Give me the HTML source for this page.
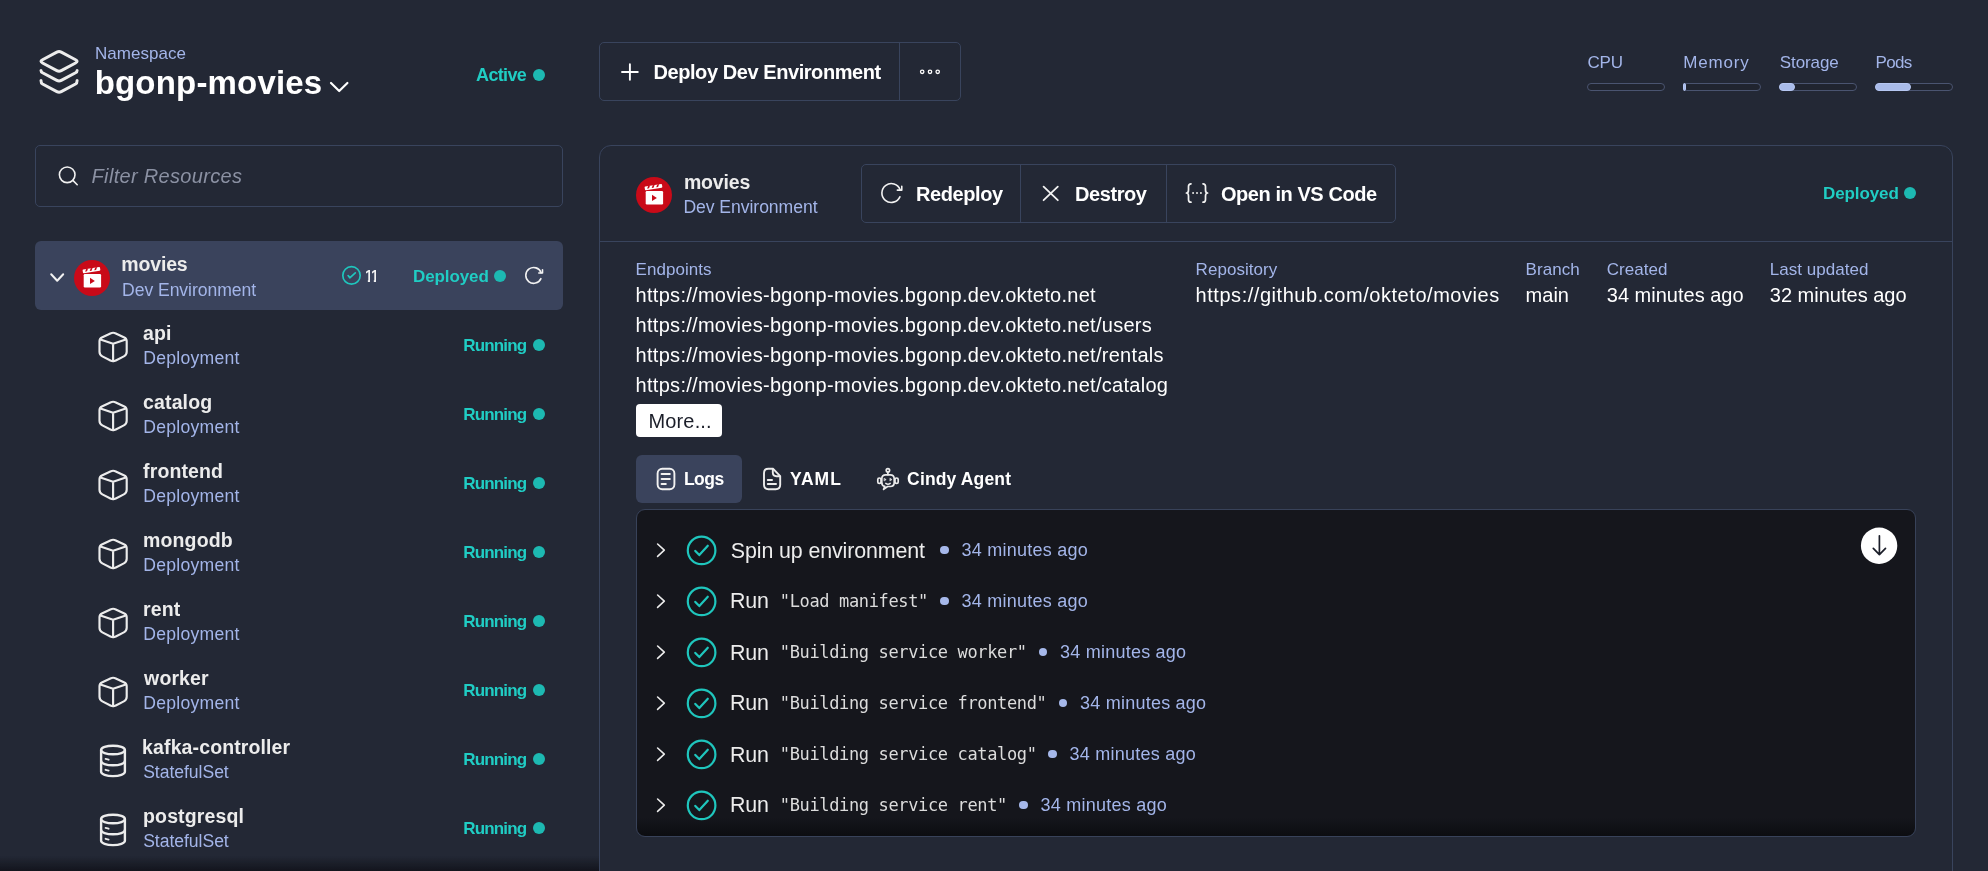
<!DOCTYPE html>
<html lang="en"><head><meta charset="utf-8"><title>Okteto - bgonp-movies</title>
<style>
html,body{margin:0;padding:0}
body{width:1988px;height:871px;overflow:hidden;position:relative;background:#232835;font-family:"Liberation Sans",sans-serif;color:#f2f2f2}
.t{position:absolute;line-height:1;white-space:pre;margin:0}
.m{font-family:"DejaVu Sans Mono","Liberation Mono",monospace}
.i{position:absolute;overflow:visible}
.dot{position:absolute;border-radius:50%;display:block}
#app{position:absolute;left:0;top:0;width:1988px;height:871px;will-change:transform}
.box{position:absolute;box-sizing:border-box}
.one{display:inline-block;width:4.9px;overflow:hidden;text-indent:-1px;margin-right:1.1px;clip-path:polygon(0 0,100% 0,100% 100%,46% 100%,46% 66%,0 66%)}
.bd{border:1px solid #39445d}
.bar{position:absolute;box-sizing:border-box;width:78px;height:8px;top:83px;border:1px solid #4a5470;border-radius:4px;background:#20242f}
.bar b{position:absolute;left:-1px;top:-1px;height:8px;box-sizing:border-box;border-radius:4px;background:#a9bbe9;border:1px solid #b6c7f2}
.vline{position:absolute;width:1px;background:#39445d}

</style></head><body><div id="app">
<aside id="sidebar">
<header>
<svg class="i" style="left:36px;top:46px" width="46" height="50" viewBox="36 46 46 50" ><g fill="none" stroke="#ececec" stroke-width="3" stroke-linecap="round" stroke-linejoin="round"><path d="M56.84 52.08 Q59.05 50.90 61.26 52.08 L75.56 59.70 Q78.65 61.35 75.56 63.00 L61.26 70.62 Q59.05 71.80 56.84 70.62 L42.54 63.00 Q39.45 61.35 42.54 59.70 Z"/><path d="M41.00 70.40 Q41.00 71.80 42.54 72.70 L56.84 80.32 Q59.05 81.50 61.26 80.32 L75.56 72.70 Q77.10 71.80 77.10 70.40"/><path d="M41.00 80.40 Q41.00 83.15 42.54 84.05 L56.84 91.67 Q59.05 92.85 61.26 91.67 L75.56 84.05 Q77.10 83.15 77.10 80.40"/></g></svg>
<span class="t" style="left:95.00px;top:45.00px;font-size:17px;color:#a3b5e9;letter-spacing:0.036px;">Namespace</span>
<span class="t" style="left:94.70px;top:66.00px;font-size:33px;color:#ffffff;font-weight:700;letter-spacing:0.182px;">bgonp-movies</span>
<svg class="i" style="left:328px;top:80px" width="23" height="14" viewBox="328 80 23 14" ><path d="M331 83 L339.2 91 L347.4 83" fill="none" stroke="#ffffff" stroke-width="2.2" stroke-linecap="round" stroke-linejoin="round"/></svg>
<span class="t" style="left:476.10px;top:66.00px;font-size:18px;color:#20cdc4;font-weight:700;letter-spacing:-0.680px;">Active</span>
<i class="dot" style="left:532.80px;top:68.80px;width:12.4px;height:12.4px;background:#1db9b2"></i>
</header>
<div class="box bd" style="left:35px;top:145px;width:528px;height:62px;border-radius:5px"></div>
<svg class="i" style="left:56px;top:164px" width="26" height="26" viewBox="56 164 26 26" ><g fill="none" stroke="#f0f0f0" stroke-width="1.6" stroke-linecap="round"><circle cx="67.2" cy="174.8" r="7.8"/><path d="M72.9 180.4 L77.2 184.7"/></g></svg>
<span class="t" style="left:91.60px;top:166.00px;font-size:20px;color:#8b91a3;letter-spacing:0.313px;font-style:italic;">Filter Resources</span>
<nav>
<div class="box" style="left:35px;top:241px;width:528px;height:69px;border-radius:6px;background:#3a435c"></div>
<svg class="i" style="left:48px;top:271px" width="18" height="13" viewBox="48 271 18 13" ><path d="M51.2 274.3 L57.2 280.8 L63.2 274.3" fill="none" stroke="#f2f2f2" stroke-width="2" stroke-linecap="round" stroke-linejoin="round"/></svg>
<svg class="i" style="left:74px;top:260px" width="36" height="36" viewBox="74 260 36 36" ><circle cx="92" cy="278" r="18" fill="#c90a18"/><rect x="83.7" y="274.1" width="17.4" height="13.4" rx="1.2" fill="#fff"/><path d="M90.0 277.8 L94.9 280.9 L90.0 284.0 Z" fill="#c90a18"/><g transform="rotate(-9 83.7 273.5)"><rect x="83.1" y="269.5" width="17.6" height="3.8" rx="0.8" fill="#fff"/><path d="M86.9 269.3 l1.9 0 l-1.5 2.6 l-1.9 0 Z" fill="#c90a18"/><path d="M91.5 269.3 l1.9 0 l-1.5 2.6 l-1.9 0 Z" fill="#c90a18"/><path d="M96.1 269.3 l1.9 0 l-1.5 2.6 l-1.9 0 Z" fill="#c90a18"/></g></svg>
<span class="t" style="left:121.30px;top:255.00px;font-size:19.5px;color:#ececec;font-weight:700;letter-spacing:-0.160px;">movies</span>
<span class="t" style="left:122.00px;top:282.00px;font-size:17.6px;color:#a3b5e9;letter-spacing:-0.057px;">Dev Environment</span>
<svg class="i" style="left:340px;top:264px" width="24" height="24" viewBox="340 264 24 24" ><g fill="none" stroke="#1fc6bd" stroke-width="1.7" stroke-linecap="round" stroke-linejoin="round"><circle cx="351.5" cy="275.4" r="8.7"/><path d="M348.1 275.6 L349.8 277.8 L355.3 272.8"/></g></svg>
<span class="t" style="left:365.6px;top:268px;font-size:16.5px;font-weight:700;color:#f2f2f2"><span class="one">1</span><span class="one">1</span></span>
<span class="t" style="left:413.10px;top:268.00px;font-size:17px;color:#20cdc4;font-weight:700;letter-spacing:-0.114px;">Deployed</span>
<i class="dot" style="left:494.00px;top:269.80px;width:12.4px;height:12.4px;background:#1db9b2"></i>
<svg class="i" style="left:521px;top:263px" width="24" height="24" viewBox="521 263 24 24" ><g fill="none" stroke="#f2f2f2" stroke-width="1.6" stroke-linecap="round" stroke-linejoin="round"><path d="M540.92 278.61 A7.9 7.9 0 1 1 541.12 272.70"/><path d="M538.80 273.00 L542.50 273.00 L542.50 269.80"/></g></svg>
<svg class="i" style="left:96px;top:329px" width="34" height="36" viewBox="96 329 34 36" ><g fill="none" stroke="#ececec" stroke-width="2.15" stroke-linecap="round" stroke-linejoin="round"><path d="M110.40 333.41 Q113.10 332.10 115.80 333.41 L124.36 337.56 Q126.70 338.70 126.70 341.30 L126.70 351.70 Q126.70 354.90 123.85 356.36 L115.77 360.53 Q113.10 361.90 110.43 360.53 L102.35 356.36 Q99.50 354.90 99.50 351.70 L99.50 341.30 Q99.50 338.70 101.84 337.56 Z"/><path d="M100.4 339.4 L113.1 343.8 L125.8 339.4 M113.1 343.8 L113.1 361.1"/></g></svg>
<span class="t" style="left:143.10px;top:324.00px;font-size:19.5px;color:#ececec;font-weight:700;letter-spacing:0.119px;">api</span>
<span class="t" style="left:143.20px;top:350.00px;font-size:17.6px;color:#a3b5e9;letter-spacing:0.267px;">Deployment</span>
<span class="t" style="left:463.30px;top:337.00px;font-size:17px;color:#20cdc4;font-weight:700;letter-spacing:-0.850px;">Running</span>
<i class="dot" style="left:532.90px;top:338.80px;width:12.4px;height:12.4px;background:#1db9b2"></i>
<svg class="i" style="left:96px;top:398px" width="34" height="36" viewBox="96 398 34 36" ><g fill="none" stroke="#ececec" stroke-width="2.15" stroke-linecap="round" stroke-linejoin="round"><path d="M110.40 402.41 Q113.10 401.10 115.80 402.41 L124.36 406.56 Q126.70 407.70 126.70 410.30 L126.70 420.70 Q126.70 423.90 123.85 425.36 L115.77 429.53 Q113.10 430.90 110.43 429.53 L102.35 425.36 Q99.50 423.90 99.50 420.70 L99.50 410.30 Q99.50 407.70 101.84 406.56 Z"/><path d="M100.4 408.4 L113.1 412.8 L125.8 408.4 M113.1 412.8 L113.1 430.1"/></g></svg>
<span class="t" style="left:143.10px;top:393.00px;font-size:19.5px;color:#ececec;font-weight:700;letter-spacing:0.119px;">catalog</span>
<span class="t" style="left:143.20px;top:419.00px;font-size:17.6px;color:#a3b5e9;letter-spacing:0.267px;">Deployment</span>
<span class="t" style="left:463.30px;top:406.00px;font-size:17px;color:#20cdc4;font-weight:700;letter-spacing:-0.850px;">Running</span>
<i class="dot" style="left:532.90px;top:407.80px;width:12.4px;height:12.4px;background:#1db9b2"></i>
<svg class="i" style="left:96px;top:467px" width="34" height="36" viewBox="96 467 34 36" ><g fill="none" stroke="#ececec" stroke-width="2.15" stroke-linecap="round" stroke-linejoin="round"><path d="M110.40 471.41 Q113.10 470.10 115.80 471.41 L124.36 475.56 Q126.70 476.70 126.70 479.30 L126.70 489.70 Q126.70 492.90 123.85 494.36 L115.77 498.53 Q113.10 499.90 110.43 498.53 L102.35 494.36 Q99.50 492.90 99.50 489.70 L99.50 479.30 Q99.50 476.70 101.84 475.56 Z"/><path d="M100.4 477.4 L113.1 481.8 L125.8 477.4 M113.1 481.8 L113.1 499.1"/></g></svg>
<span class="t" style="left:143.10px;top:462.00px;font-size:19.5px;color:#ececec;font-weight:700;letter-spacing:0.119px;">frontend</span>
<span class="t" style="left:143.20px;top:488.00px;font-size:17.6px;color:#a3b5e9;letter-spacing:0.267px;">Deployment</span>
<span class="t" style="left:463.30px;top:475.00px;font-size:17px;color:#20cdc4;font-weight:700;letter-spacing:-0.850px;">Running</span>
<i class="dot" style="left:532.90px;top:476.80px;width:12.4px;height:12.4px;background:#1db9b2"></i>
<svg class="i" style="left:96px;top:536px" width="34" height="36" viewBox="96 536 34 36" ><g fill="none" stroke="#ececec" stroke-width="2.15" stroke-linecap="round" stroke-linejoin="round"><path d="M110.40 540.41 Q113.10 539.10 115.80 540.41 L124.36 544.56 Q126.70 545.70 126.70 548.30 L126.70 558.70 Q126.70 561.90 123.85 563.36 L115.77 567.53 Q113.10 568.90 110.43 567.53 L102.35 563.36 Q99.50 561.90 99.50 558.70 L99.50 548.30 Q99.50 545.70 101.84 544.56 Z"/><path d="M100.4 546.4 L113.1 550.8 L125.8 546.4 M113.1 550.8 L113.1 568.1"/></g></svg>
<span class="t" style="left:143.10px;top:531.00px;font-size:19.5px;color:#ececec;font-weight:700;letter-spacing:0.119px;">mongodb</span>
<span class="t" style="left:143.20px;top:557.00px;font-size:17.6px;color:#a3b5e9;letter-spacing:0.267px;">Deployment</span>
<span class="t" style="left:463.30px;top:544.00px;font-size:17px;color:#20cdc4;font-weight:700;letter-spacing:-0.850px;">Running</span>
<i class="dot" style="left:532.90px;top:545.80px;width:12.4px;height:12.4px;background:#1db9b2"></i>
<svg class="i" style="left:96px;top:605px" width="34" height="36" viewBox="96 605 34 36" ><g fill="none" stroke="#ececec" stroke-width="2.15" stroke-linecap="round" stroke-linejoin="round"><path d="M110.40 609.41 Q113.10 608.10 115.80 609.41 L124.36 613.56 Q126.70 614.70 126.70 617.30 L126.70 627.70 Q126.70 630.90 123.85 632.36 L115.77 636.53 Q113.10 637.90 110.43 636.53 L102.35 632.36 Q99.50 630.90 99.50 627.70 L99.50 617.30 Q99.50 614.70 101.84 613.56 Z"/><path d="M100.4 615.4 L113.1 619.8 L125.8 615.4 M113.1 619.8 L113.1 637.1"/></g></svg>
<span class="t" style="left:143.10px;top:600.00px;font-size:19.5px;color:#ececec;font-weight:700;letter-spacing:0.119px;">rent</span>
<span class="t" style="left:143.20px;top:626.00px;font-size:17.6px;color:#a3b5e9;letter-spacing:0.267px;">Deployment</span>
<span class="t" style="left:463.30px;top:613.00px;font-size:17px;color:#20cdc4;font-weight:700;letter-spacing:-0.850px;">Running</span>
<i class="dot" style="left:532.90px;top:614.80px;width:12.4px;height:12.4px;background:#1db9b2"></i>
<svg class="i" style="left:96px;top:674px" width="34" height="36" viewBox="96 674 34 36" ><g fill="none" stroke="#ececec" stroke-width="2.15" stroke-linecap="round" stroke-linejoin="round"><path d="M110.40 678.41 Q113.10 677.10 115.80 678.41 L124.36 682.56 Q126.70 683.70 126.70 686.30 L126.70 696.70 Q126.70 699.90 123.85 701.36 L115.77 705.53 Q113.10 706.90 110.43 705.53 L102.35 701.36 Q99.50 699.90 99.50 696.70 L99.50 686.30 Q99.50 683.70 101.84 682.56 Z"/><path d="M100.4 684.4 L113.1 688.8 L125.8 684.4 M113.1 688.8 L113.1 706.1"/></g></svg>
<span class="t" style="left:144.10px;top:669.00px;font-size:19.5px;color:#ececec;font-weight:700;letter-spacing:0.119px;">worker</span>
<span class="t" style="left:143.20px;top:695.00px;font-size:17.6px;color:#a3b5e9;letter-spacing:0.267px;">Deployment</span>
<span class="t" style="left:463.30px;top:682.00px;font-size:17px;color:#20cdc4;font-weight:700;letter-spacing:-0.850px;">Running</span>
<i class="dot" style="left:532.90px;top:683.80px;width:12.4px;height:12.4px;background:#1db9b2"></i>
<svg class="i" style="left:97px;top:742px" width="32" height="38" viewBox="97 742 32 38" ><g fill="none" stroke="#ececec" stroke-width="2.4" stroke-linecap="round" stroke-linejoin="round"><ellipse cx="113" cy="750" rx="11.9" ry="4.3"/><path d="M101.1 750 V771.8 A11.9 4.3 0 0 0 124.9 771.8 V750"/><path d="M101.1 761 A11.9 4.3 0 0 0 124.9 761"/><path d="M105.6 758.9 l3 0.8 M105.6 769.8 l3 0.8" stroke-width="1.9"/></g></svg>
<span class="t" style="left:142.10px;top:738.00px;font-size:19.5px;color:#ececec;font-weight:700;letter-spacing:0.119px;">kafka-controller</span>
<span class="t" style="left:143.20px;top:764.00px;font-size:17.6px;color:#a3b5e9;letter-spacing:-0.050px;">StatefulSet</span>
<span class="t" style="left:463.30px;top:751.00px;font-size:17px;color:#20cdc4;font-weight:700;letter-spacing:-0.850px;">Running</span>
<i class="dot" style="left:532.90px;top:752.80px;width:12.4px;height:12.4px;background:#1db9b2"></i>
<svg class="i" style="left:97px;top:811px" width="32" height="38" viewBox="97 811 32 38" ><g fill="none" stroke="#ececec" stroke-width="2.4" stroke-linecap="round" stroke-linejoin="round"><ellipse cx="113" cy="819" rx="11.9" ry="4.3"/><path d="M101.1 819 V840.8 A11.9 4.3 0 0 0 124.9 840.8 V819"/><path d="M101.1 830 A11.9 4.3 0 0 0 124.9 830"/><path d="M105.6 827.9 l3 0.8 M105.6 838.8 l3 0.8" stroke-width="1.9"/></g></svg>
<span class="t" style="left:143.10px;top:807.00px;font-size:19.5px;color:#ececec;font-weight:700;letter-spacing:0.119px;">postgresql</span>
<span class="t" style="left:143.20px;top:833.00px;font-size:17.6px;color:#a3b5e9;letter-spacing:-0.050px;">StatefulSet</span>
<span class="t" style="left:463.30px;top:820.00px;font-size:17px;color:#20cdc4;font-weight:700;letter-spacing:-0.850px;">Running</span>
<i class="dot" style="left:532.90px;top:821.80px;width:12.4px;height:12.4px;background:#1db9b2"></i>
</nav>
<div class="box" style="left:0;top:856px;width:599px;height:15px;background:linear-gradient(to bottom,rgba(18,20,28,0),rgba(18,20,28,0.95))"></div>
</aside>
<section id="topbar">
<div class="box bd" style="left:599px;top:42px;width:362px;height:59px;border-radius:5px"></div>
<div class="vline" style="left:899px;top:43px;height:57px"></div>
<svg class="i" style="left:618px;top:60px" width="24" height="24" viewBox="618 60 24 24" ><path d="M622 72 H637.8 M629.9 64.2 V79.8" fill="none" stroke="#fff" stroke-width="1.9" stroke-linecap="round"/></svg>
<span class="t" style="left:653.50px;top:62.00px;font-size:20px;color:#ffffff;font-weight:700;letter-spacing:-0.431px;">Deploy Dev Environment</span>
<svg class="i" style="left:917px;top:66px" width="26" height="12" viewBox="917 66 26 12" ><g fill="none" stroke="#fff" stroke-width="1.3"><circle cx="922.2" cy="71.8" r="1.7"/><circle cx="930" cy="71.8" r="1.7"/><circle cx="937.7" cy="71.8" r="1.7"/></g></svg>
<span class="t" style="left:1587.60px;top:54.00px;font-size:17px;color:#a3b5e9;letter-spacing:-0.250px;">CPU</span>
<div class="bar" style="left:1587px"></div>
<span class="t" style="left:1683.20px;top:54.00px;font-size:17px;color:#a3b5e9;letter-spacing:0.840px;">Memory</span>
<div class="bar" style="left:1683px"><b style="width:3px"></b></div>
<span class="t" style="left:1779.80px;top:54.00px;font-size:17px;color:#a3b5e9;letter-spacing:-0.100px;">Storage</span>
<div class="bar" style="left:1779px"><b style="width:16px"></b></div>
<span class="t" style="left:1875.60px;top:54.00px;font-size:17px;color:#a3b5e9;letter-spacing:-0.667px;">Pods</span>
<div class="bar" style="left:1875px"><b style="width:36px"></b></div>
</section>
<main id="panel">
<div class="box bd" style="left:599px;top:145px;width:1354px;height:760px;border-radius:12px"></div>
<div class="box" style="left:600px;top:241px;width:1352px;height:1px;background:#39445d"></div>
<svg class="i" style="left:636px;top:177px" width="36" height="36" viewBox="636 177 36 36" ><circle cx="654" cy="195" r="18" fill="#c90a18"/><rect x="645.7" y="191.1" width="17.4" height="13.4" rx="1.2" fill="#fff"/><path d="M652.0 194.8 L656.9 197.9 L652.0 201.0 Z" fill="#c90a18"/><g transform="rotate(-9 645.7 190.5)"><rect x="645.1" y="186.5" width="17.6" height="3.8" rx="0.8" fill="#fff"/><path d="M648.9 186.3 l1.9 0 l-1.5 2.6 l-1.9 0 Z" fill="#c90a18"/><path d="M653.5 186.3 l1.9 0 l-1.5 2.6 l-1.9 0 Z" fill="#c90a18"/><path d="M658.1 186.3 l1.9 0 l-1.5 2.6 l-1.9 0 Z" fill="#c90a18"/></g></svg>
<span class="t" style="left:683.90px;top:173.00px;font-size:19.5px;color:#ececec;font-weight:700;letter-spacing:-0.160px;">movies</span>
<span class="t" style="left:683.40px;top:199.00px;font-size:17.6px;color:#a3b5e9;letter-spacing:-0.057px;">Dev Environment</span>
<div class="box bd" style="left:861px;top:164px;width:535px;height:59px;border-radius:5px"></div>
<div class="vline" style="left:1020px;top:165px;height:57px"></div>
<div class="vline" style="left:1166px;top:165px;height:57px"></div>
<svg class="i" style="left:877px;top:179px" width="27" height="27" viewBox="877 179 27 27" ><g fill="none" stroke="#f2f2f2" stroke-width="1.6" stroke-linecap="round" stroke-linejoin="round"><path d="M899.89 196.82 A9.4 9.4 0 1 1 900.13 189.79"/><path d="M897.37 190.14 L901.77 190.14 L901.77 186.33"/></g></svg>
<span class="t" style="left:916.10px;top:184.00px;font-size:20px;color:#ffffff;font-weight:700;letter-spacing:-0.431px;">Redeploy</span>
<svg class="i" style="left:1039px;top:182px" width="24" height="24" viewBox="1039 182 24 24" ><path d="M1043.6 186.6 L1057.8 200.2 M1057.8 186.6 L1043.6 200.2" fill="none" stroke="#f2f2f2" stroke-width="1.8" stroke-linecap="round"/></svg>
<span class="t" style="left:1075.10px;top:184.00px;font-size:20px;color:#ffffff;font-weight:700;letter-spacing:-0.431px;">Destroy</span>
<svg class="i" style="left:1183px;top:180px" width="28" height="26" viewBox="1183 180 28 26" ><g fill="none" stroke="#f2f2f2" stroke-width="1.7" stroke-linecap="round" stroke-linejoin="round"><path d="M1191 183.8 Q1188.5 183.8 1188.5 186.6 L1188.5 190 Q1188.5 193 1186.4 193 Q1188.5 193 1188.5 196 L1188.5 199.4 Q1188.5 202.2 1191 202.2"/><path d="M1203 183.8 Q1205.5 183.8 1205.5 186.6 L1205.5 190 Q1205.5 193 1207.6 193 Q1205.5 193 1205.5 196 L1205.5 199.4 Q1205.5 202.2 1203 202.2"/><rect x="1192.2" y="192.1" width="1.8" height="1.8" fill="#dcdcdc" stroke="none"/><rect x="1196.1" y="192.1" width="1.8" height="1.8" fill="#dcdcdc" stroke="none"/><rect x="1200.0" y="192.1" width="1.8" height="1.8" fill="#dcdcdc" stroke="none"/></g></svg>
<span class="t" style="left:1220.90px;top:184.00px;font-size:20px;color:#ffffff;font-weight:700;letter-spacing:-0.431px;">Open in VS Code</span>
<span class="t" style="left:1823.10px;top:185.00px;font-size:17px;color:#20cdc4;font-weight:700;letter-spacing:-0.114px;">Deployed</span>
<i class="dot" style="left:1903.80px;top:186.80px;width:12.4px;height:12.4px;background:#1db9b2"></i>
<span class="t" style="left:635.60px;top:261.00px;font-size:17px;color:#a3b5e9;letter-spacing:0.036px;">Endpoints</span>
<span class="t" style="left:635.60px;top:285.00px;font-size:20px;color:#ffffff;letter-spacing:0.287px;">https://movies-bgonp-movies.bgonp.dev.okteto.net</span>
<span class="t" style="left:635.60px;top:315.00px;font-size:20px;color:#ffffff;letter-spacing:0.287px;">https://movies-bgonp-movies.bgonp.dev.okteto.net/users</span>
<span class="t" style="left:635.60px;top:345.00px;font-size:20px;color:#ffffff;letter-spacing:0.287px;">https://movies-bgonp-movies.bgonp.dev.okteto.net/rentals</span>
<span class="t" style="left:635.60px;top:375.00px;font-size:20px;color:#ffffff;letter-spacing:0.287px;">https://movies-bgonp-movies.bgonp.dev.okteto.net/catalog</span>
<span class="t" style="left:1195.60px;top:261.00px;font-size:17px;color:#a3b5e9;letter-spacing:0.036px;">Repository</span>
<span class="t" style="left:1195.60px;top:285.00px;font-size:20px;color:#ffffff;letter-spacing:0.542px;">https://github.com/okteto/movies</span>
<span class="t" style="left:1525.60px;top:261.00px;font-size:17px;color:#a3b5e9;letter-spacing:0.036px;">Branch</span>
<span class="t" style="left:1525.60px;top:285.00px;font-size:20px;color:#ffffff;">main</span>
<span class="t" style="left:1606.80px;top:261.00px;font-size:17px;color:#a3b5e9;letter-spacing:0.036px;">Created</span>
<span class="t" style="left:1606.80px;top:285.00px;font-size:20px;color:#ffffff;">34 minutes ago</span>
<span class="t" style="left:1769.80px;top:261.00px;font-size:17px;color:#a3b5e9;letter-spacing:0.036px;">Last updated</span>
<span class="t" style="left:1769.80px;top:285.00px;font-size:20px;color:#ffffff;">32 minutes ago</span>
<div class="box" style="left:636px;top:404px;width:86px;height:33px;border-radius:4px;background:#ffffff"></div>
<span class="t" style="left:648.40px;top:411.00px;font-size:20px;color:#1b1e29;letter-spacing:0.167px;">More...</span>
<div class="box" style="left:636px;top:455px;width:106px;height:48px;border-radius:6px;background:#3a435c"></div>
<svg class="i" style="left:654px;top:465px" width="24" height="28" viewBox="654 465 24 28" ><g fill="none" stroke="#f2f2f2" stroke-width="1.9" stroke-linecap="round" stroke-linejoin="round"><rect x="657.6" y="468.8" width="16.8" height="20.4" rx="4.6"/><path d="M661.6 473.9 H669.8 M661.6 479 H669.8 M661.6 484 H665.8" stroke-width="2"/></g></svg>
<span class="t" style="left:683.90px;top:471.00px;font-size:17.5px;color:#ffffff;font-weight:700;letter-spacing:-0.467px;">Logs</span>
<svg class="i" style="left:760px;top:465px" width="24" height="28" viewBox="760 465 24 28" ><g fill="none" stroke="#ececec" stroke-width="1.9" stroke-linecap="round" stroke-linejoin="round"><path d="M773.2 468.8 H768.4 Q764 468.8 764 473.2 V484.8 Q764 489.2 768.4 489.2 H775.8 Q780.2 489.2 780.2 484.8 V476.2 Z"/><path d="M772.8 469.4 V472.6 Q772.8 476.2 776.4 476.2 H779.6"/><path d="M767.8 480 H772 M767.8 484.1 H776" stroke-width="2"/></g></svg>
<span class="t" style="left:789.90px;top:471.00px;font-size:17.5px;color:#ffffff;font-weight:700;letter-spacing:1.000px;">YAML</span>
<svg class="i" style="left:874px;top:465px" width="28" height="28" viewBox="874 465 28 28" ><g fill="none" stroke="#ececec" stroke-width="1.7" stroke-linecap="round" stroke-linejoin="round"><circle cx="887.9" cy="470.3" r="1.7"/><path d="M887.9 472.2 V474.6"/><path d="M885.8 474.8 H890.2 Q894.2 474.8 894.2 478.8 V482.5 Q894.2 486.5 890.2 486.5 H887.6 L883.6 489.4 L884.8 486.4 Q881.8 486 881.8 482.5 V478.8 Q881.8 474.8 885.8 474.8 Z"/><rect x="877.8" y="478" width="3.2" height="5.4" rx="1.5"/><rect x="895" y="478" width="3.2" height="5.4" rx="1.5"/><path d="M884.4 478.4 L886.2 479.6 L884.4 480.8 Z M890.2 478.4 L892 479.6 L890.2 480.8 Z" fill="#ececec" stroke-width="0.6"/><path d="M885.8 483.4 Q888 485 890.2 483.4" stroke-width="1.5"/></g></svg>
<span class="t" style="left:907.10px;top:471.00px;font-size:17.5px;color:#ffffff;font-weight:700;letter-spacing:0.150px;">Cindy Agent</span>
<div class="box" style="left:636px;top:509px;width:1280px;height:328px;border-radius:9px;border:1px solid #384259;background:linear-gradient(to bottom,#15161c 0,#15161c 308px,#0b0c10 327px)"></div>
<svg class="i" style="left:654px;top:541px" width="13" height="19" viewBox="654 541 13 19" ><path d="M657.6 544.0 L664.3 550.2 L657.6 556.4" fill="none" stroke="#ececec" stroke-width="1.6" stroke-linecap="round" stroke-linejoin="round"/></svg>
<svg class="i" style="left:684px;top:533px" width="35" height="35" viewBox="684 533 35 35" ><g fill="none" stroke="#1fc6bd" stroke-width="2.2" stroke-linecap="round" stroke-linejoin="round"><circle cx="701.6" cy="550.4" r="13.8"/><path d="M695.3 550.9 L699.3 555.1 L707.8 545.7"/></g></svg>
<span class="t" style="left:730.80px;top:541.00px;font-size:21.4px;color:#ececec;letter-spacing:-0.111px;">Spin up environment</span>
<i class="dot" style="left:940.40px;top:546.30px;width:8.2px;height:8.2px;background:#a6b8ea"></i>
<span class="t" style="left:961.60px;top:541.00px;font-size:18px;color:#a3b5e9;letter-spacing:0.231px;">34 minutes ago</span>
<svg class="i" style="left:654px;top:592px" width="13" height="19" viewBox="654 592 13 19" ><path d="M657.6 595.0 L664.3 601.2 L657.6 607.4" fill="none" stroke="#ececec" stroke-width="1.6" stroke-linecap="round" stroke-linejoin="round"/></svg>
<svg class="i" style="left:684px;top:584px" width="35" height="35" viewBox="684 584 35 35" ><g fill="none" stroke="#1fc6bd" stroke-width="2.2" stroke-linecap="round" stroke-linejoin="round"><circle cx="701.6" cy="601.4" r="13.8"/><path d="M695.3 601.9 L699.3 606.1 L707.8 596.7"/></g></svg>
<span class="t" style="left:730.00px;top:591.00px;font-size:21.4px;color:#ececec;letter-spacing:-0.111px;">Run</span>
<span class="t m" style="left:779.80px;top:593.00px;font-size:17px;color:#dcdcdc;letter-spacing:-0.361px;">"Load manifest"</span>
<i class="dot" style="left:940.40px;top:597.30px;width:8.2px;height:8.2px;background:#a6b8ea"></i>
<span class="t" style="left:961.60px;top:592.00px;font-size:18px;color:#a3b5e9;letter-spacing:0.231px;">34 minutes ago</span>
<svg class="i" style="left:654px;top:643px" width="13" height="19" viewBox="654 643 13 19" ><path d="M657.6 646.0 L664.3 652.2 L657.6 658.4" fill="none" stroke="#ececec" stroke-width="1.6" stroke-linecap="round" stroke-linejoin="round"/></svg>
<svg class="i" style="left:684px;top:635px" width="35" height="35" viewBox="684 635 35 35" ><g fill="none" stroke="#1fc6bd" stroke-width="2.2" stroke-linecap="round" stroke-linejoin="round"><circle cx="701.6" cy="652.4" r="13.8"/><path d="M695.3 652.9 L699.3 657.1 L707.8 647.7"/></g></svg>
<span class="t" style="left:730.00px;top:643.00px;font-size:21.4px;color:#ececec;letter-spacing:-0.111px;">Run</span>
<span class="t m" style="left:779.80px;top:644.00px;font-size:17px;color:#dcdcdc;letter-spacing:-0.361px;">"Building service worker"</span>
<i class="dot" style="left:1038.60px;top:648.30px;width:8.2px;height:8.2px;background:#a6b8ea"></i>
<span class="t" style="left:1060.00px;top:643.00px;font-size:18px;color:#a3b5e9;letter-spacing:0.231px;">34 minutes ago</span>
<svg class="i" style="left:654px;top:694px" width="13" height="19" viewBox="654 694 13 19" ><path d="M657.6 697.0 L664.3 703.2 L657.6 709.4" fill="none" stroke="#ececec" stroke-width="1.6" stroke-linecap="round" stroke-linejoin="round"/></svg>
<svg class="i" style="left:684px;top:686px" width="35" height="35" viewBox="684 686 35 35" ><g fill="none" stroke="#1fc6bd" stroke-width="2.2" stroke-linecap="round" stroke-linejoin="round"><circle cx="701.6" cy="703.4" r="13.8"/><path d="M695.3 703.9 L699.3 708.1 L707.8 698.7"/></g></svg>
<span class="t" style="left:730.00px;top:693.00px;font-size:21.4px;color:#ececec;letter-spacing:-0.111px;">Run</span>
<span class="t m" style="left:779.80px;top:695.00px;font-size:17px;color:#dcdcdc;letter-spacing:-0.361px;">"Building service frontend"</span>
<i class="dot" style="left:1058.60px;top:699.30px;width:8.2px;height:8.2px;background:#a6b8ea"></i>
<span class="t" style="left:1080.00px;top:694.00px;font-size:18px;color:#a3b5e9;letter-spacing:0.231px;">34 minutes ago</span>
<svg class="i" style="left:654px;top:745px" width="13" height="19" viewBox="654 745 13 19" ><path d="M657.6 748.0 L664.3 754.2 L657.6 760.4" fill="none" stroke="#ececec" stroke-width="1.6" stroke-linecap="round" stroke-linejoin="round"/></svg>
<svg class="i" style="left:684px;top:737px" width="35" height="35" viewBox="684 737 35 35" ><g fill="none" stroke="#1fc6bd" stroke-width="2.2" stroke-linecap="round" stroke-linejoin="round"><circle cx="701.6" cy="754.4" r="13.8"/><path d="M695.3 754.9 L699.3 759.1 L707.8 749.7"/></g></svg>
<span class="t" style="left:730.00px;top:745.00px;font-size:21.4px;color:#ececec;letter-spacing:-0.111px;">Run</span>
<span class="t m" style="left:779.80px;top:746.00px;font-size:17px;color:#dcdcdc;letter-spacing:-0.361px;">"Building service catalog"</span>
<i class="dot" style="left:1048.40px;top:750.30px;width:8.2px;height:8.2px;background:#a6b8ea"></i>
<span class="t" style="left:1069.60px;top:745.00px;font-size:18px;color:#a3b5e9;letter-spacing:0.231px;">34 minutes ago</span>
<svg class="i" style="left:654px;top:796px" width="13" height="19" viewBox="654 796 13 19" ><path d="M657.6 799.0 L664.3 805.2 L657.6 811.4" fill="none" stroke="#ececec" stroke-width="1.6" stroke-linecap="round" stroke-linejoin="round"/></svg>
<svg class="i" style="left:684px;top:788px" width="35" height="35" viewBox="684 788 35 35" ><g fill="none" stroke="#1fc6bd" stroke-width="2.2" stroke-linecap="round" stroke-linejoin="round"><circle cx="701.6" cy="805.4" r="13.8"/><path d="M695.3 805.9 L699.3 810.1 L707.8 800.7"/></g></svg>
<span class="t" style="left:730.00px;top:795.00px;font-size:21.4px;color:#ececec;letter-spacing:-0.111px;">Run</span>
<span class="t m" style="left:779.80px;top:797.00px;font-size:17px;color:#dcdcdc;letter-spacing:-0.361px;">"Building service rent"</span>
<i class="dot" style="left:1019.40px;top:801.30px;width:8.2px;height:8.2px;background:#a6b8ea"></i>
<span class="t" style="left:1040.60px;top:796.00px;font-size:18px;color:#a3b5e9;letter-spacing:0.231px;">34 minutes ago</span>
<svg class="i" style="left:1860px;top:526px" width="40" height="40" viewBox="1860 526 40 40" ><circle cx="1879.1" cy="545.7" r="18.2" fill="#ffffff"/><path d="M1879.4 535.8 V554.6 M1873.3 548.4 L1879.4 554.7 L1885.5 548.4" fill="none" stroke="#1b1e29" stroke-width="1.7" stroke-linecap="round" stroke-linejoin="round"/></svg>
</main>
</div></body></html>
